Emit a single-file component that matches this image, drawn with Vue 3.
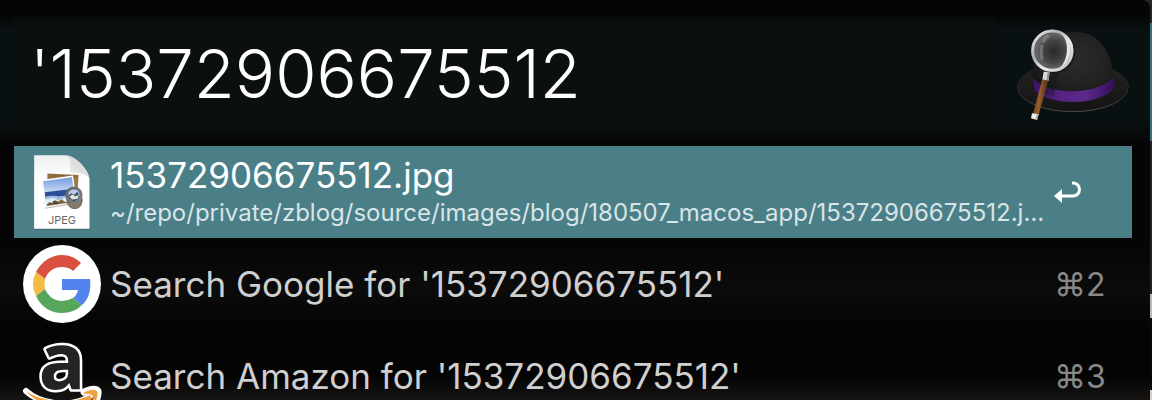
<script setup>
import { ref } from 'vue'

const query = ref("'15372906675512")
const results = [
  {
    icon: 'jpeg',
    title: '15372906675512.jpg',
    path: '~/repo/private/zblog/source/images/blog/180507_macos_app/15372906675512.j…',
    selected: true,
  },
  { icon: 'google', title: "Search Google for '15372906675512'", key: '⌘2' },
  { icon: 'amazon', title: "Search Amazon for '15372906675512'", key: '⌘3' },
]
</script>

<template>
  <div class="desktop">
    <main class="launcher">
      <header class="bar">
        <input v-model="query" class="field" type="text" aria-label="Search" spellcheck="false" autocomplete="off" />
        <button class="hat" type="button" aria-label="Preferences">
          <svg viewBox="105 81 348 288" width="116" height="96" aria-hidden="true">
            <defs>
              <radialGradient id="crown" cx="0.55" cy="0.4" r="0.6">
                <stop offset="0" stop-color="#2c2c2c" />
                <stop offset="0.7" stop-color="#202020" />
                <stop offset="1" stop-color="#151515" />
              </radialGradient>
              <linearGradient id="band" x1="0" x2="1" y1="0" y2="0">
                <stop offset="0" stop-color="#3d1263" />
                <stop offset="0.35" stop-color="#552481" />
                <stop offset="0.65" stop-color="#5c2a8a" />
                <stop offset="1" stop-color="#360d5a" />
              </linearGradient>
              <linearGradient id="brim" x1="0" x2="0" y1="0" y2="1">
                <stop offset="0" stop-color="#232323" />
                <stop offset="1" stop-color="#141414" />
              </linearGradient>
              <linearGradient id="brimEdge" x1="0" x2="0" y1="0" y2="1">
                <stop offset="0" stop-color="#1c1e1e" />
                <stop offset="0.5" stop-color="#2a2b2b" />
                <stop offset="1" stop-color="#4a4a4a" />
              </linearGradient>
              <linearGradient id="ring" x1="0" x2="1" y1="0" y2="1">
                <stop offset="0" stop-color="#f4f4f4" />
                <stop offset="0.35" stop-color="#a9abad" />
                <stop offset="0.6" stop-color="#ededed" />
                <stop offset="1" stop-color="#b7b9ba" />
              </linearGradient>
              <radialGradient id="lens" cx="0.55" cy="0.52" r="0.55">
                <stop offset="0" stop-color="#292929" />
                <stop offset="0.55" stop-color="#454545" />
                <stop offset="1" stop-color="#747678" />
              </radialGradient>
              <linearGradient id="wood" x1="0" x2="1" y1="0" y2="0.2">
                <stop offset="0" stop-color="#5f3b19" />
                <stop offset="0.5" stop-color="#94602f" />
                <stop offset="1" stop-color="#49290f" />
              </linearGradient>
            </defs>
            <ellipse cx="279" cy="264" rx="166" ry="74" fill="url(#brim)" stroke="url(#brimEdge)" stroke-width="3" />
            <path d="M157 236C161 170 178 101 281 99C366 97 393 168 403 236L401 272C350 320 214 320 164 270Z" fill="url(#crown)" />
            <path d="M157 232C190 292 359 292 402 232L403 267C360 322 207 322 164 274Z" fill="url(#band)" />
            <path d="M207 244L236 218L222 291L185 282Z" fill="#101010" opacity="0.35" />
            <circle cx="221" cy="159" r="61" fill="none" stroke="#0c0c0c" stroke-width="8" opacity="0.45" />
            <circle cx="217" cy="155" r="57" fill="url(#lens)" stroke="#5d6062" stroke-width="13" />
            <circle cx="217" cy="155" r="59" fill="none" stroke="url(#ring)" stroke-width="9" />
            <path d="M246 105C282 130 280 184 240 207C266 180 268 130 246 105Z" fill="#e5e6e6" />
            <path d="M181 139Q177 157 181 181L191 183Q186 158 191 136Z" fill="#929698" opacity="0.5" />
            <path d="M183 128Q189 112 204 104L210 113Q198 119 193 132Z" fill="#a2a5a7" opacity="0.4" />
            <path d="M191 218L209 219L205 246L187 242Z" fill="#dcdcdc" />
            <path d="M203 219L209 219L205 246L199 245Z" fill="#8e9192" />
            <path d="M187 241L205 245L176 347L159 344Z" fill="url(#wood)" />
            <path d="M156 343L176 346L171 363L153 358Z" fill="#f1f1f1" />
            <path d="M170 346L176 346L171 363L165 361Z" fill="#afafaf" />
          </svg>
        </button>
      </header>

      <ul class="results">
        <li v-for="r in results" :key="r.title">
          <button class="row" :class="{ selected: r.selected }" type="button">
            <span class="icon">
              <svg v-if="r.icon === 'jpeg'" viewBox="72 38 168 226" width="56" height="75" aria-hidden="true">
                <defs>
                  <linearGradient id="sheet" x1="0" x2="0" y1="0" y2="1">
                    <stop offset="0" stop-color="#eeeeee" />
                    <stop offset="0.3" stop-color="#ffffff" />
                  </linearGradient>
                  <linearGradient id="fold" x1="0" x2="1" y1="1" y2="0">
                    <stop offset="0" stop-color="#ffffff" />
                    <stop offset="0.55" stop-color="#dcdcdc" />
                    <stop offset="1" stop-color="#f8f8f8" />
                  </linearGradient>
                  <linearGradient id="sky" x1="0" x2="0" y1="0" y2="1">
                    <stop offset="0" stop-color="#7597dc" />
                    <stop offset="1" stop-color="#cfe0f8" />
                  </linearGradient>
                  <linearGradient id="loupe" x1="0" x2="1" y1="0" y2="1">
                    <stop offset="0" stop-color="#5c6166" />
                    <stop offset="1" stop-color="#8d8678" />
                  </linearGradient>
                </defs>
                <path d="M72 41H166C196 41 240 86 240 116V263H72Z" fill="#2c565d" opacity="0.5" />
                <path d="M72 39H166C196 39 239 84 239 114V260H72Z" fill="url(#sheet)" />
                <path d="M166 39C182 42 181 62 180 91C204 91 234 92 239 114C235 82 196 39 166 39Z" fill="url(#fold)" />
                <path d="M112 94L206 98L203 150L112 140Z" fill="#9b7a49" />
                <path d="M118 98L201 102M120 104L200 106" stroke="#5c4325" stroke-width="3" stroke-dasharray="3 5" />
                <path d="M95 115L190 102L201 184L106 200Z" fill="#b5b5b5" />
                <path d="M94 113L189 100L200 181L106 197Z" fill="#fff" />
                <path d="M99 117L186 105L191 143L104 153Z" fill="url(#sky)" />
                <path d="M104 150L191 140L193 158L106 169Z" fill="#294f9c" />
                <path d="M106 163Q132 158 150 164L193 153L195 171L109 190Z" fill="#9ebadb" />
                <path d="M107 171L131 167L145 174L166 166L194 169L195 176L109 191Z" fill="#dcebf5" />
                <path d="M110 188L118 180L126 184L134 174L144 178L155 171L164 179L181 181L111 192Z" fill="#806743" />
                <path d="M116 187L130 182L145 185M129 178L142 180" stroke="#3a3c31" stroke-width="3" fill="none" />
                <ellipse cx="194" cy="174" rx="24" ry="27" fill="#5e5a53" />
                <ellipse cx="195" cy="183" rx="21" ry="17" fill="#85796c" />
                <circle cx="192" cy="159" r="23" fill="#b7cce8" stroke="url(#loupe)" stroke-width="6" />
                <circle cx="192" cy="159" r="19" fill="none" stroke="#2d3335" stroke-width="2" />
                <path d="M174 161L184 153L193 158L203 148L209 163Q203 177 190 177Q177 174 174 161Z" fill="#46576b" />
                <path d="M178 163L189 157L196 163L207 158L203 170L186 172Z" fill="#e2e4de" />
                <text x="156" y="247" text-anchor="middle" class="filetype">JPEG</text>
              </svg>

              <svg v-else-if="r.icon === 'google'" viewBox="0 0 78 78" width="78" height="78" aria-hidden="true">
                <circle cx="39" cy="39" r="39" fill="#fff" />
                <path d="M39 10C47 10 53 13 58 18L50 26C47 23 43 22 39 22C31 22 25 26 22 34L13 27C18 17 28 10 39 10Z" fill="#d95040" />
                <path d="M13 27L22 34Q21 39 22 44L13 51Q7 39 13 27Z" fill="#f2bd42" />
                <path d="M13 51L22 44C25 51 31 56 39 56Q45 56 50 53L59 60Q51 68 39 68C28 68 18 62 13 51Z" fill="#58a55c" />
                <path d="M39 34H67Q69 51 59 60L50 53Q54 50 55 45H39Z" fill="#5383ec" />
              </svg>

              <svg v-else class="amazon" viewBox="0 0 78 78" width="78" height="78" aria-hidden="true">
                <text x="39" y="52" text-anchor="middle" class="monogram">a</text>
                <path d="M3 54C18 68 49 71 67 59" fill="none" stroke="#fff" stroke-width="6" stroke-linecap="round" />
                <path d="M61 55Q72 50 75 54Q76 61 69 70" fill="none" stroke="#fff" stroke-width="7" stroke-linejoin="round" stroke-linecap="round" />
                <path d="M3 54C18 65 48 68 67 58L69 62C48 77 17 71 3 54Z" fill="#f0a040" />
                <path d="M61 56Q71 51 74 55Q75 61 69 69Q71 60 70 58Q67 56 61 56Z" fill="#f0a040" stroke="#f0a040" />
              </svg>
            </span>

            <span class="text">
              <span class="title">{{ r.title }}</span>
              <span v-if="r.path" class="path">{{ r.path }}</span>
            </span>

            <span class="key">
              <svg v-if="r.selected" viewBox="0 0 28 22" width="28" height="22" aria-label="Return" role="img">
                <path d="M18 2H19A6 6 0 0 1 19 15H6" fill="none" stroke="#fff" stroke-width="3" />
                <path d="M0 15L8 8V22Z" fill="#fff" />
              </svg>
              <template v-else>{{ r.key }}</template>
            </span>
          </button>
        </li>
      </ul>
    </main>
  </div>
</template>

<style>
body {
  margin: 0;
  background: #050505;
}
</style>

<style scoped>
.desktop {
  box-sizing: border-box;
  height: 100vh;
  overflow: hidden;
  padding-right: 2px;
  background: linear-gradient(#242424 0 23px, #3d7078 23px 141px, #242222 141px 294px, #b9b9b9 294px 318px, #080808 318px 390px, #d8d3c8 390px);
  font-family: Inter, "Liberation Sans", sans-serif;
}

.launcher {
  min-height: 100%;
  border-radius: 0 8px 0 0;
  background: linear-gradient(#050505 0 14px, #091012 30px 120px, #070a0b 136px, #050505 146px 240px, #0b0b0b 290px, #040404 330px 376px, #161413 400px);
}

.bar {
  display: flex;
  padding: 17px 0 16px 14px;
}

.field {
  box-sizing: border-box;
  flex: 1;
  min-width: 0;
  height: 113px;
  padding: 0 16px;
  border: 0;
  outline: 0;
  background: rgba(13, 15, 15, 0.6);
  color: #fff;
  font: 300 67px/84px Inter, "Liberation Sans", sans-serif;
}

.hat {
  display: grid;
  place-items: center;
  width: 154px;
  padding: 0;
  border: 0;
  background: none;
}

.results {
  margin: 0;
  padding: 0 18px 0 14px;
  list-style: none;
}

.row {
  box-sizing: border-box;
  display: flex;
  align-items: center;
  width: 100%;
  height: 92px;
  padding: 0 28px 0 9px;
  border: 0;
  background: none;
  color: #cfcfcf;
  font-family: inherit;
  text-align: left;
}

.selected {
  background: #4b7f87;
  color: #fff;
}

.icon {
  display: grid;
  place-items: center;
  flex: none;
  width: 78px;
  height: 78px;
}

.text {
  display: flex;
  flex: 1;
  flex-direction: column;
  min-width: 0;
  margin: 0 8px 0 9px;
}

.title,
.path {
  overflow: hidden;
  text-overflow: ellipsis;
  white-space: nowrap;
}

.title {
  font-size: 35px;
  line-height: 42px;
}

.path {
  color: #d8e4e6;
  font-size: 24px;
  line-height: 34px;
}

.key {
  flex: none;
  width: 50px;
  color: #888;
  font-size: 32px;
  white-space: nowrap;
}

.key svg {
  display: block;
}

.filetype {
  fill: #666;
  font: 33px Inter, "Liberation Sans", sans-serif;
}

.amazon {
  overflow: visible;
}

.monogram {
  fill: #232323;
  stroke: #fff;
  stroke-width: 5px;
  stroke-linejoin: round;
  paint-order: stroke;
  font: 700 78px "Open Sans", "Noto Sans", sans-serif;
}
</style>
